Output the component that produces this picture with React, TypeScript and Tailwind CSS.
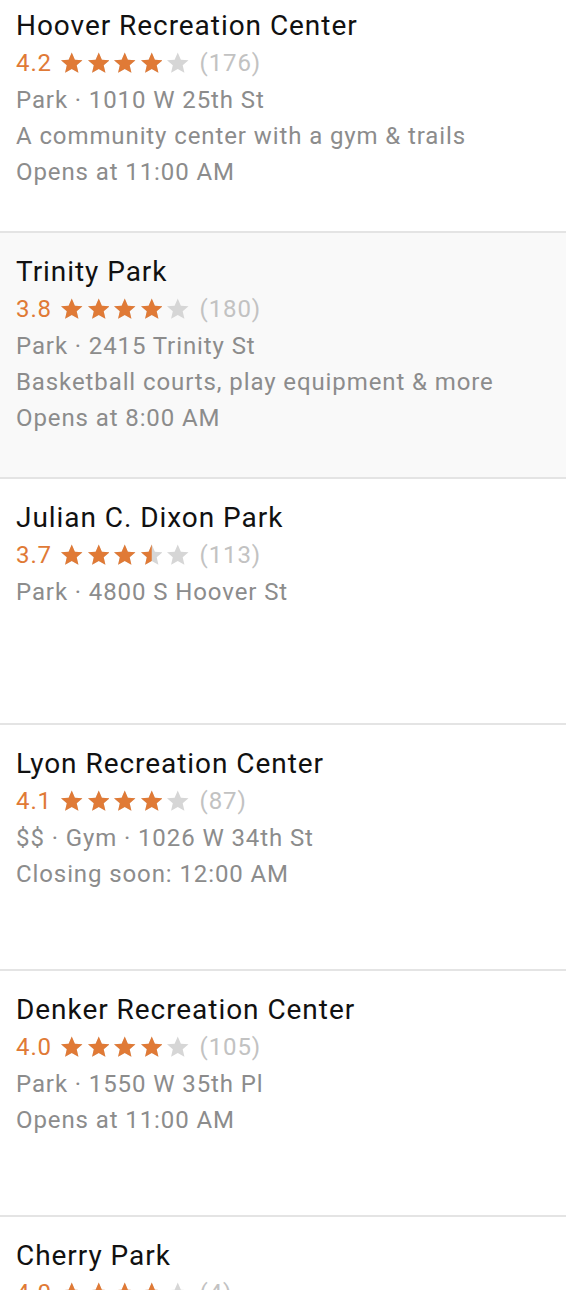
import { FC } from "react";

interface Place {
  name: string;
  rating: number;
  count: number;
  lines: string[];
  shaded?: boolean;
}

const places: Place[] = [
  {
    name: "Hoover Recreation Center",
    rating: 4.2,
    count: 176,
    lines: ["Park · 1010 W 25th St", "A community center with a gym & trails", "Opens at 11:00 AM"],
  },
  {
    name: "Trinity Park",
    rating: 3.8,
    count: 180,
    lines: ["Park · 2415 Trinity St", "Basketball courts, play equipment & more", "Opens at 8:00 AM"],
    shaded: true,
  },
  {
    name: "Julian C. Dixon Park",
    rating: 3.7,
    count: 113,
    lines: ["Park · 4800 S Hoover St"],
  },
  {
    name: "Lyon Recreation Center",
    rating: 4.1,
    count: 87,
    lines: ["$$ · Gym · 1026 W 34th St", "Closing soon: 12:00 AM"],
  },
  {
    name: "Denker Recreation Center",
    rating: 4.0,
    count: 105,
    lines: ["Park · 1550 W 35th Pl", "Opens at 11:00 AM"],
  },
  {
    name: "Cherry Park",
    rating: 4.0,
    count: 4,
    lines: [],
  },
];

const STAR = "M12 2.5l2.9 6.6 7.1.6-5.4 4.7 1.6 7-6.2-3.7-6.2 3.7 1.6-7L2 9.7l7.1-.6z";

// fill: 0, 0.5 or 1
const Star: FC<{ fill: number; id: string }> = ({ fill, id }) => (
  <svg width="21.5" height="21" viewBox="2 2 20 19.5" className="shrink-0 mr-[5px]">
    <defs>
      <clipPath id={id}>
        <rect x="0" y="0" width={2 + 20 * fill} height="24" />
      </clipPath>
    </defs>
    <path d={STAR} fill="#d6d6d6" />
    {fill > 0 && <path d={STAR} fill="#e07a36" clipPath={`url(#${id})`} />}
  </svg>
);

const Stars: FC<{ rating: number; keyId: string }> = ({ rating, keyId }) => {
  const fills = [0, 1, 2, 3, 4].map((i) => {
    const r = rating - i;
    if (r >= 0.75) return 1;
    if (r >= 0.25) return 0.5;
    return 0;
  });
  return (
    <div className="flex items-center ml-[9px] mb-[1px]">
      {fills.map((f, i) => (
        <Star key={i} fill={f} id={`${keyId}-${i}`} />
      ))}
    </div>
  );
};

const PlaceRow: FC<{ place: Place; idx: number }> = ({ place, idx }) => (
  <div
    className={`h-[246px] border-t-2 border-[#e4e4e4] pl-[16px] pt-[20px] ${
      place.shaded ? "bg-[#f9f9f9]" : "bg-white"
    }`}
  >
    <div className="text-[28px] leading-[37px] tracking-[0.95px] text-[#111]">{place.name}</div>
    <div className="flex items-center h-[38px] pb-[1px] text-[24px] tracking-[0.9px]">
      <span className="text-[#e07a36]">{place.rating.toFixed(1)}</span>
      <Stars rating={place.rating} keyId={`p${idx}`} />
      <span className="ml-[6px] text-[#c2c2c2]">({place.count})</span>
    </div>
    {place.lines.map((l) => (
      <div key={l} className="text-[24px] leading-[36px] tracking-[0.9px] text-[#8c8c8c]">
        {l}
      </div>
    ))}
  </div>
);

export default function App() {
  return (
    <div className="w-[566px] h-[1290px] overflow-hidden bg-white font-['Roboto',sans-serif]">
      <div className="-mt-[15px]">
        {places.map((p, i) => (
          <PlaceRow key={p.name} place={p} idx={i} />
        ))}
      </div>
    </div>
  );
}
